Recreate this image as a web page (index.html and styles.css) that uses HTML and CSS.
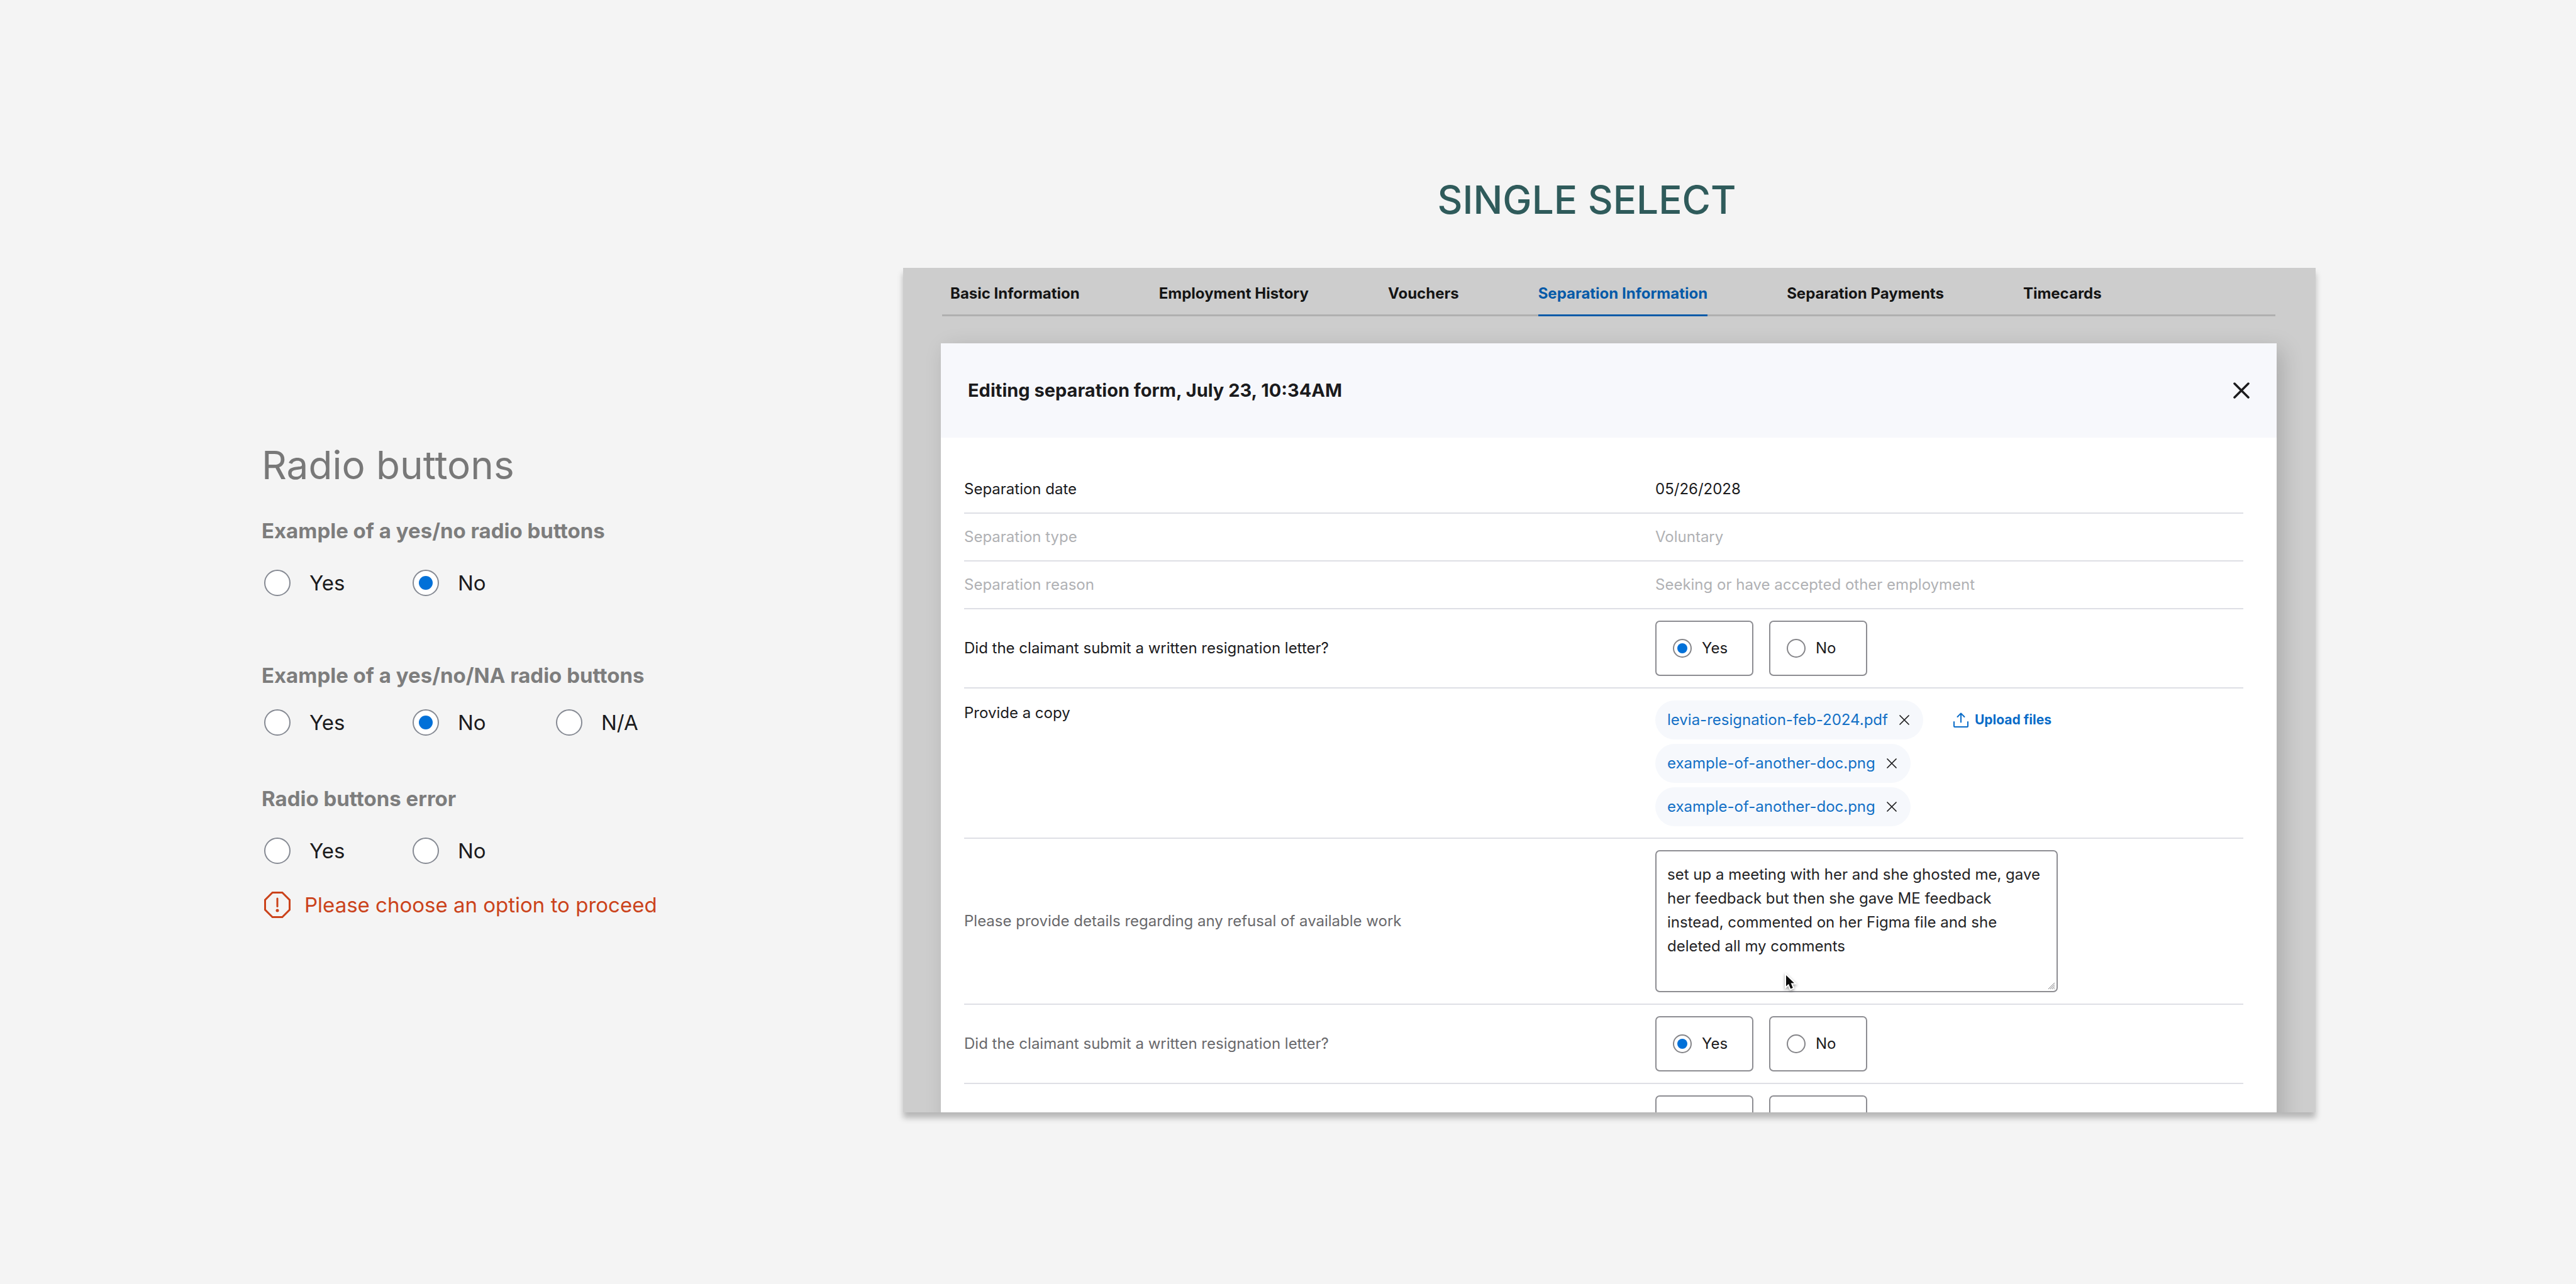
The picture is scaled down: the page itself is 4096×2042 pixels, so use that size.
FILE: index.html
```html
<!DOCTYPE html>
<html lang="en">
<head>
<meta charset="utf-8">
<title>Radio buttons – single select</title>
<link rel="stylesheet" href="styles.css">
</head>
<body>
<main class="board">
  <aside class="specs">
    <h1 class="specs-title">Radio buttons</h1>

    <fieldset class="spec spec-first">
      <legend class="spec-label">Example of a yes/no radio buttons</legend>
      <div class="options">
        <label class="option"><input class="radio" type="radio" name="ex1">Yes</label>
        <label class="option"><input class="radio" type="radio" name="ex1" checked>No</label>
      </div>
    </fieldset>

    <fieldset class="spec spec-tight">
      <legend class="spec-label">Example of a yes/no/NA radio buttons</legend>
      <div class="options">
        <label class="option"><input class="radio" type="radio" name="ex2">Yes</label>
        <label class="option"><input class="radio" type="radio" name="ex2" checked>No</label>
        <label class="option"><input class="radio" type="radio" name="ex2">N/A</label>
      </div>
    </fieldset>

    <fieldset class="spec">
      <legend class="spec-label">Radio buttons error</legend>
      <div class="options">
        <label class="option"><input class="radio" type="radio" name="ex3">Yes</label>
        <label class="option"><input class="radio" type="radio" name="ex3">No</label>
      </div>
      <p class="error">
        <svg class="error-icon" viewBox="0 0 42 42" aria-hidden="true">
          <path d="M13.2 1.5h15.6L40.5 13.2v15.6L28.800 40.500H13.200L1.500 28.800V13.200z" fill="none" stroke="currentColor" stroke-width="3"/>
          <path d="M21 11v12.500" stroke="currentColor" stroke-width="3" stroke-linecap="round"/>
          <circle cx="21" cy="30" r="2.500" fill="currentColor"/>
        </svg>
        Please choose an option to proceed
      </p>
    </fieldset>
  </aside>

  <section class="demo">
    <h2 class="demo-title">SINGLE SELECT</h2>

    <div class="screen">
      <nav class="tabs">
        <a class="tab" href="#basic">Basic Information</a>
        <a class="tab" href="#employment">Employment History</a>
        <a class="tab" href="#vouchers">Vouchers</a>
        <a class="tab tab-active" href="#separation" aria-current="page">Separation Information</a>
        <a class="tab" href="#payments">Separation Payments</a>
        <a class="tab" href="#timecards">Timecards</a>
      </nav>

      <form class="modal">
        <header class="modal-header">
          <h3 class="modal-title">Editing separation form, July 23, 10:34AM</h3>
          <button class="icon-button" type="button" aria-label="Close">
            <svg class="close-icon" viewBox="0 0 26 26" aria-hidden="true"><path d="M2 2l22 22M24 2L2 24" stroke="currentColor" stroke-width="3.500" stroke-linecap="round"/></svg>
          </button>
        </header>

        <div class="rows">
          <div class="row">
            <span class="row-label">Separation date</span>
            <span class="row-value">05/26/2028</span>
          </div>
          <div class="row row-disabled">
            <span class="row-label">Separation type</span>
            <span class="row-value">Voluntary</span>
          </div>
          <div class="row row-disabled">
            <span class="row-label">Separation reason</span>
            <span class="row-value">Seeking or have accepted other employment</span>
          </div>
          <div class="row" role="radiogroup" aria-labelledby="q1">
            <span class="row-label" id="q1">Did the claimant submit a written resignation letter?</span>
            <div class="choices">
              <label class="choice"><input class="radio radio-small" type="radio" name="letter1" checked>Yes</label>
              <label class="choice"><input class="radio radio-small" type="radio" name="letter1">No</label>
            </div>
          </div>
          <div class="row row-files">
            <span class="row-label">Provide a copy</span>
            <div class="files">
              <ul class="chips">
                <li class="chip"><a class="chip-link" href="#file-1">levia-resignation-feb-2024.pdf</a>
                  <button class="icon-button" type="button" aria-label="Remove file"><svg class="remove-icon" viewBox="0 0 16 16" aria-hidden="true"><path d="M1 1l14 14M15 1L1 15" stroke="currentColor" stroke-width="1.700" stroke-linecap="round"/></svg></button></li>
                <li class="chip"><a class="chip-link" href="#file-2">example-of-another-doc.png</a>
                  <button class="icon-button" type="button" aria-label="Remove file"><svg class="remove-icon" viewBox="0 0 16 16" aria-hidden="true"><path d="M1 1l14 14M15 1L1 15" stroke="currentColor" stroke-width="1.700" stroke-linecap="round"/></svg></button></li>
                <li class="chip"><a class="chip-link" href="#file-3">example-of-another-doc.png</a>
                  <button class="icon-button" type="button" aria-label="Remove file"><svg class="remove-icon" viewBox="0 0 16 16" aria-hidden="true"><path d="M1 1l14 14M15 1L1 15" stroke="currentColor" stroke-width="1.700" stroke-linecap="round"/></svg></button></li>
              </ul>
              <button class="upload" type="button">
                <svg class="upload-icon" viewBox="0 0 24 24" fill="none" stroke="currentColor" stroke-width="2" stroke-linecap="round" stroke-linejoin="round" aria-hidden="true"><path d="M1 15v7q0 1 1 1h20q1 0 1-1v-7M12 15.500V1.500M6.500 7L12 1.500 17.500 7"/></svg>
                Upload files
              </button>
            </div>
          </div>
          <div class="row row-muted">
            <label class="row-label" for="details">Please provide details regarding any refusal of available work</label>
            <div class="note">
              <textarea class="note-input" id="details">set up a meeting with her and she ghosted me, gave her feedback but then she gave ME feedback instead, commented on her Figma file and she deleted all my comments</textarea>
              <svg class="note-grip" viewBox="0 0 12 12" aria-hidden="true"><path d="M1 11L11 1M4 11l7-7M7 11l4-4M10 11l1-1" stroke="#77777b" stroke-width="1"/></svg>
              <svg class="pointer" viewBox="0 0 20 26" aria-hidden="true"><path d="M3 2v17.500l4-3.700 3.200 7.700 3.600-1.500-3.200-7.500H16z" fill="#fff" stroke="#fff" stroke-width="4"/><path d="M3 2v17.500l4-3.700 3.200 7.700 3.600-1.500-3.200-7.500H16z" fill="#0c0c0c"/></svg>
            </div>
          </div>
          <div class="row row-muted" role="radiogroup" aria-labelledby="q2">
            <span class="row-label" id="q2">Did the claimant submit a written resignation letter?</span>
            <div class="choices">
              <label class="choice"><input class="radio radio-small" type="radio" name="letter2" checked>Yes</label>
              <label class="choice"><input class="radio radio-small" type="radio" name="letter2">No</label>
            </div>
          </div>
          <div class="row row-muted">
            <span class="row-label"></span>
            <div class="choices">
              <span class="choice"></span>
              <span class="choice"></span>
            </div>
          </div>
        </div>
      </form>
    </div>
  </section>
</main>
</body>
</html>
```
FILE: styles.css
```css
* {
  box-sizing: border-box;
}

body {
  margin: 0;
  background: #f4f4f4;
  color: #1b1b1d;
  font-family: Inter, "Liberation Sans", sans-serif;
  font-size: 24px;
  line-height: 36px;
}

h1, h2, h3, p, ul, fieldset, legend {
  margin: 0;
  padding: 0;
}

button {
  border: 0;
  padding: 0;
  background: none;
  color: inherit;
  font: inherit;
}

svg {
  display: block;
}

.board {
  display: grid;
  grid-template-columns: 1020fr 2246fr;
  align-items: start;
  min-height: 100vh;
  padding: 282px 414px 0 416px;
}

/* Left column: component specs */

.specs {
  margin-top: 422px;
}

.specs-title {
  margin-bottom: 48px;
  color: #787878;
  font-size: 62px;
  font-weight: 400;
  line-height: 72px;
}

.spec {
  margin-bottom: 80px;
  border: 0;
  font-size: 33px;
  line-height: 42px;
}

.spec-first {
  margin-bottom: 106px;
}

.spec-label {
  margin-bottom: 42px;
  color: #7d7d7d;
  font-weight: 700;
  line-height: 40px;
}

.spec-tight .spec-label {
  margin-bottom: 34px;
}

.options {
  display: grid;
  grid-template-columns: 236px 228px auto;
  padding-left: 4px;
}

.option {
  display: flex;
  align-items: center;
  gap: 30px;
}

.radio {
  display: grid;
  place-items: center;
  flex: none;
  width: 42px;
  height: 42px;
  margin: 0;
  appearance: none;
  border: 2px solid #868a93;
  border-radius: 50%;
  background: #fff;
}

.radio:checked::before {
  width: 22px;
  height: 22px;
  border-radius: 50%;
  background: #0070d8;
  content: "";
}

.radio-small {
  width: 30px;
  height: 30px;
  border-color: #858589;
}

.radio-small:checked::before {
  width: 16px;
  height: 16px;
}

.error {
  display: flex;
  align-items: center;
  gap: 22px;
  margin-top: 44px;
  padding-left: 4px;
  color: #cb431b;
}

.error-icon {
  width: 42px;
  height: 42px;
}

/* Right column: the form in use */

.demo-title {
  margin-bottom: 72px;
  padding-right: 72px;
  color: #2f5b5b;
  font-size: 62px;
  font-weight: 500;
  line-height: 72px;
  text-align: center;
}

.screen {
  aspect-ratio: 2246 / 1343;
  overflow: hidden;
  padding: 0 62px 0 60px;
  background: #cdcdcd;
  box-shadow: 0 9px 9px rgba(0, 0, 0, 0.25);
}

.tabs {
  display: flex;
  gap: 126px;
  margin: 0 2px 43px;
  padding: 23px 0 0 13px;
  box-shadow: inset 0 -3px #b0b0b0;
}

.tab {
  padding-bottom: 15px;
  border-bottom: 3px solid transparent;
  color: #151515;
  font-weight: 700;
  text-decoration: none;
  white-space: nowrap;
}

.tab-active {
  border-color: #045aa8;
  color: #045aa8;
}

.modal {
  background: #fff;
  box-shadow: 9px 9px 32px rgba(0, 0, 0, 0.17);
}

.modal-header {
  display: flex;
  align-items: center;
  justify-content: space-between;
  height: 150px;
  padding: 0 43px;
  background: #f7f8fc;
}

.modal-title {
  font-size: 29px;
  font-weight: 700;
}

.close-icon {
  width: 26px;
  height: 26px;
}

.rows {
  padding: 45px 53px 18px 37px;
}

.row {
  display: grid;
  grid-template-columns: 1099fr 935fr;
  align-items: center;
  padding: 18px 0;
  border-bottom: 2px solid #dedfe5;
}

.row:has(.row-value) {
  padding: 19px 0;
}

.row-disabled {
  color: #b0b1b4;
}

.row-muted .row-label {
  color: #69696c;
}

.row-files {
  align-items: start;
  padding: 19px 0 18px;
}

.row-files .row-label {
  padding-top: 2px;
}

.choices {
  display: flex;
  gap: 25px;
}

.choice {
  display: flex;
  align-items: center;
  gap: 16px;
  width: 156px;
  height: 88px;
  padding-left: 26px;
  border: 2px solid #8d8d92;
  border-radius: 7px;
}

.files {
  display: flex;
  align-items: start;
  gap: 48px;
}

.chips {
  display: grid;
  gap: 7px;
  justify-items: start;
  list-style: none;
}

.chip {
  display: flex;
  align-items: center;
  gap: 18px;
  height: 62px;
  padding: 0 22px 0 19px;
  border-radius: 31px;
  background: #f6f8fc;
}

.chip-link {
  color: #1370c6;
  text-decoration: none;
}

.remove-icon {
  width: 16px;
  height: 16px;
}

.upload {
  display: flex;
  align-items: center;
  gap: 10px;
  height: 62px;
  color: #0a6cc8;
  font-size: 21px;
  font-weight: 700;
}

.upload-icon {
  width: 24px;
  height: 24px;
}

.note {
  position: relative;
  width: 640px;
}

.note-input {
  display: block;
  width: 100%;
  height: 226px;
  padding: 18px 17px;
  border: 2px solid #8d8d92;
  border-radius: 7px;
  background: #fff;
  color: #232325;
  font: inherit;
  line-height: 38px;
  resize: none;
}

.note-grip {
  position: absolute;
  right: 4px;
  bottom: 4px;
  width: 12px;
  height: 12px;
}

.pointer {
  position: absolute;
  top: 197px;
  left: 205px;
  width: 20px;
  height: 26px;
  overflow: visible;
  filter: drop-shadow(0 2px 2px rgba(0, 0, 0, 0.4));
}
```
